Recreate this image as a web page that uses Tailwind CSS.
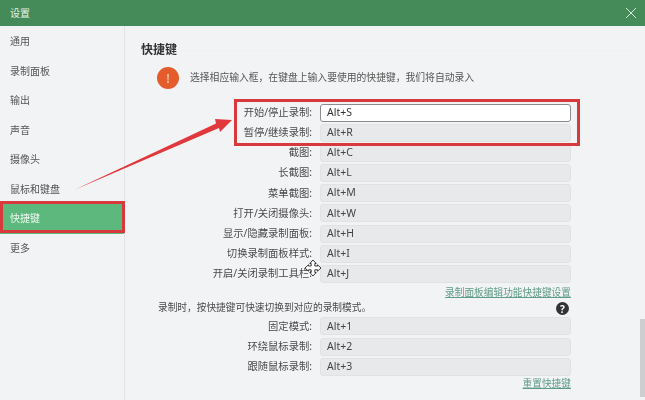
<!DOCTYPE html>
<html lang="zh">
<head>
<meta charset="utf-8">
<title>设置</title>
<script src="https://cdn.jsdelivr.net/npm/@tailwindcss/browser@4"></script>
</head>
<body class="w-[645px] h-[400px] overflow-hidden bg-[#f2f3f5] font-['Noto_Sans','Noto_Sans_CJK_SC',sans-serif] text-[#4a4a4a]">
<div class="relative flex flex-col h-[400px] blur-[0.4px]">
  <!-- title bar -->
  <header class="flex items-center justify-between h-[26px] pl-[10px] pr-[8px] bg-[#458b5a] text-[#e6f2e9] text-[10px]">
    <span>设置</span>
    <svg width="12" height="12" viewBox="0 0 12 12" fill="none" stroke="#d5e8da" stroke-width="1"><path d="M1 1l10 10M11 1L1 11"/></svg>
  </header>

  <div class="flex flex-1 min-h-0">
    <!-- side nav -->
    <aside class="w-[125px] shrink-0 border-r border-[#e2e4e6] pt-[1px] text-[10px] text-[#555]">
      <div class="h-[29.5px] flex items-center pl-[10px]">通用</div>
      <div class="h-[29.5px] flex items-center pl-[10px]">录制面板</div>
      <div class="h-[29.5px] flex items-center pl-[10px]">输出</div>
      <div class="h-[29.5px] flex items-center pl-[10px]">声音</div>
      <div class="h-[29.5px] flex items-center pl-[10px]">摄像头</div>
      <div class="h-[29.5px] flex items-center pl-[10px]">鼠标和键盘</div>
      <div class="h-[29.5px] flex items-center pl-[10px] bg-[#5cb87c] text-[#eef8f1]">快捷键</div>
      <div class="h-[29.5px] flex items-center pl-[10px]">更多</div>
    </aside>

    <!-- shortcuts panel -->
    <main class="flex-1 pl-[16px] pr-[10px]">
      <div class="flex items-center gap-[6px] h-[20px] mt-[14px]">
        <h2 class="text-[12px] font-bold text-[#333]">快捷键</h2>
        <div class="flex-1 h-px bg-[#eef0f1]"></div>
      </div>
      <div class="flex items-center mt-[7px] ml-[16px] h-[22px]">
        <span class="flex items-center justify-center w-[22px] h-[22px] rounded-full bg-[#e45c2c] text-[#f8d9c4] text-[13px] leading-none">!</span>
        <span class="ml-[11px] text-[9.8px] text-[#555]">选择相应输入框，在键盘上输入要使用的快捷键，我们将自动录入</span>
      </div>

      <div class="w-[430px] mt-[15px] flex flex-col gap-[2.65px]">
        <div class="flex items-center h-[17.5px]"><label class="w-[171px] text-right text-[10.3px]">开始/停止录制:</label><div class="ml-[8px] flex-1 h-[18px] flex items-center pl-[6px] rounded-[3px] bg-white border border-[#8a8a92] text-[10.5px] text-[#333]">Alt+S</div></div>
        <div class="flex items-center h-[17.5px]"><label class="w-[171px] text-right text-[10.3px]">暂停/继续录制:</label><div class="ml-[8px] flex-1 h-[18px] flex items-center pl-[6px] rounded-[3px] bg-[#e8e9eb] border border-[#e1e2e4] text-[10.5px] text-[#444]">Alt+R</div></div>
        <div class="flex items-center h-[17.5px]"><label class="w-[171px] text-right text-[10.3px]">截图:</label><div class="ml-[8px] flex-1 h-[18px] flex items-center pl-[6px] rounded-[3px] bg-[#e8e9eb] border border-[#e1e2e4] text-[10.5px] text-[#444]">Alt+C</div></div>
        <div class="flex items-center h-[17.5px]"><label class="w-[171px] text-right text-[10.3px]">长截图:</label><div class="ml-[8px] flex-1 h-[18px] flex items-center pl-[6px] rounded-[3px] bg-[#e8e9eb] border border-[#e1e2e4] text-[10.5px] text-[#444]">Alt+L</div></div>
        <div class="flex items-center h-[17.5px]"><label class="w-[171px] text-right text-[10.3px]">菜单截图:</label><div class="ml-[8px] flex-1 h-[18px] flex items-center pl-[6px] rounded-[3px] bg-[#e8e9eb] border border-[#e1e2e4] text-[10.5px] text-[#444]">Alt+M</div></div>
        <div class="flex items-center h-[17.5px]"><label class="w-[171px] text-right text-[10.3px]">打开/关闭摄像头:</label><div class="ml-[8px] flex-1 h-[18px] flex items-center pl-[6px] rounded-[3px] bg-[#e8e9eb] border border-[#e1e2e4] text-[10.5px] text-[#444]">Alt+W</div></div>
        <div class="flex items-center h-[17.5px]"><label class="w-[171px] text-right text-[10.3px]">显示/隐藏录制面板:</label><div class="ml-[8px] flex-1 h-[18px] flex items-center pl-[6px] rounded-[3px] bg-[#e8e9eb] border border-[#e1e2e4] text-[10.5px] text-[#444]">Alt+H</div></div>
        <div class="flex items-center h-[17.5px]"><label class="w-[171px] text-right text-[10.3px]">切换录制面板样式:</label><div class="ml-[8px] flex-1 h-[18px] flex items-center pl-[6px] rounded-[3px] bg-[#e8e9eb] border border-[#e1e2e4] text-[10.5px] text-[#444]">Alt+I</div></div>
        <div class="flex items-center h-[17.5px]"><label class="w-[171px] text-right text-[10.3px]">开启/关闭录制工具栏:</label><div class="ml-[8px] flex-1 h-[18px] flex items-center pl-[6px] rounded-[3px] bg-[#e8e9eb] border border-[#e1e2e4] text-[10.5px] text-[#444]">Alt+J</div></div>
      </div>

      <div class="w-[430px] text-right text-[9.7px] leading-[19px] text-[#5f9c86] underline">录制面板编辑功能快捷键设置</div>
      <div class="w-[430px] flex items-center justify-between h-[14px] pl-[17px] pr-[2px] text-[9.7px]">
        <span>录制时，按快捷键可快速切换到对应的录制模式。</span>
        <span class="flex items-center justify-center w-[13px] h-[13px] rounded-full bg-[#333] text-white text-[10px] font-bold leading-none">?</span>
      </div>

      <div class="w-[430px] mt-[2px] flex flex-col gap-[2.65px]">
        <div class="flex items-center h-[17.5px]"><label class="w-[171px] text-right text-[10.3px]">固定模式:</label><div class="ml-[8px] flex-1 h-[18px] flex items-center pl-[6px] rounded-[3px] bg-[#e8e9eb] border border-[#e1e2e4] text-[10.5px] text-[#444]">Alt+1</div></div>
        <div class="flex items-center h-[17.5px]"><label class="w-[171px] text-right text-[10.3px]">环绕鼠标录制:</label><div class="ml-[8px] flex-1 h-[18px] flex items-center pl-[6px] rounded-[3px] bg-[#e8e9eb] border border-[#e1e2e4] text-[10.5px] text-[#444]">Alt+2</div></div>
        <div class="flex items-center h-[17.5px]"><label class="w-[171px] text-right text-[10.3px]">跟随鼠标录制:</label><div class="ml-[8px] flex-1 h-[18px] flex items-center pl-[6px] rounded-[3px] bg-[#e8e9eb] border border-[#e1e2e4] text-[10.5px] text-[#444]">Alt+3</div></div>
      </div>
      <div class="w-[430px] text-right text-[9.7px] leading-[18px] text-[#5f9c86] underline">重置快捷键</div>
    </main>
  </div>

  <!-- scrollbar thumb -->
  <div class="absolute left-[640px] top-[319px] w-[5px] h-[78px] bg-[#cdcecf]"></div>

  <!-- red annotations drawn over the screenshot -->
  <div class="absolute left-[234px] top-[99px] w-[346px] h-[47px] border-[3px] border-[#d8393c]"></div>
  <div class="absolute left-0 top-[201px] w-[125px] h-[32px] border-[3px] border-[#d8393c]"></div>
  <svg class="absolute left-0 top-0" width="645" height="400" viewBox="0 0 645 400" fill="none">
    <path d="M74 190L216 123.5L215 119L232 120L220 132L219 128Z" fill="#e0383c"/>
    <!-- move cursor -->
    <g transform="translate(313 268)" stroke="#3a3a3a" stroke-width="1" fill="#fff" stroke-linejoin="round">
      <path d="M-1.8 -2V-4.5H-3.2L0 -8L3.2 -4.5H1.8V-2H4.5V-3.2L8 0L4.5 3.2V1.8H1.8V4.5H3.2L0 8L-3.2 4.5H-1.8V1.8H-4.5V3.2L-8 0L-4.5 -3.2V-2Z"/>
    </g>
  </svg>
</div>
</body>
</html>
